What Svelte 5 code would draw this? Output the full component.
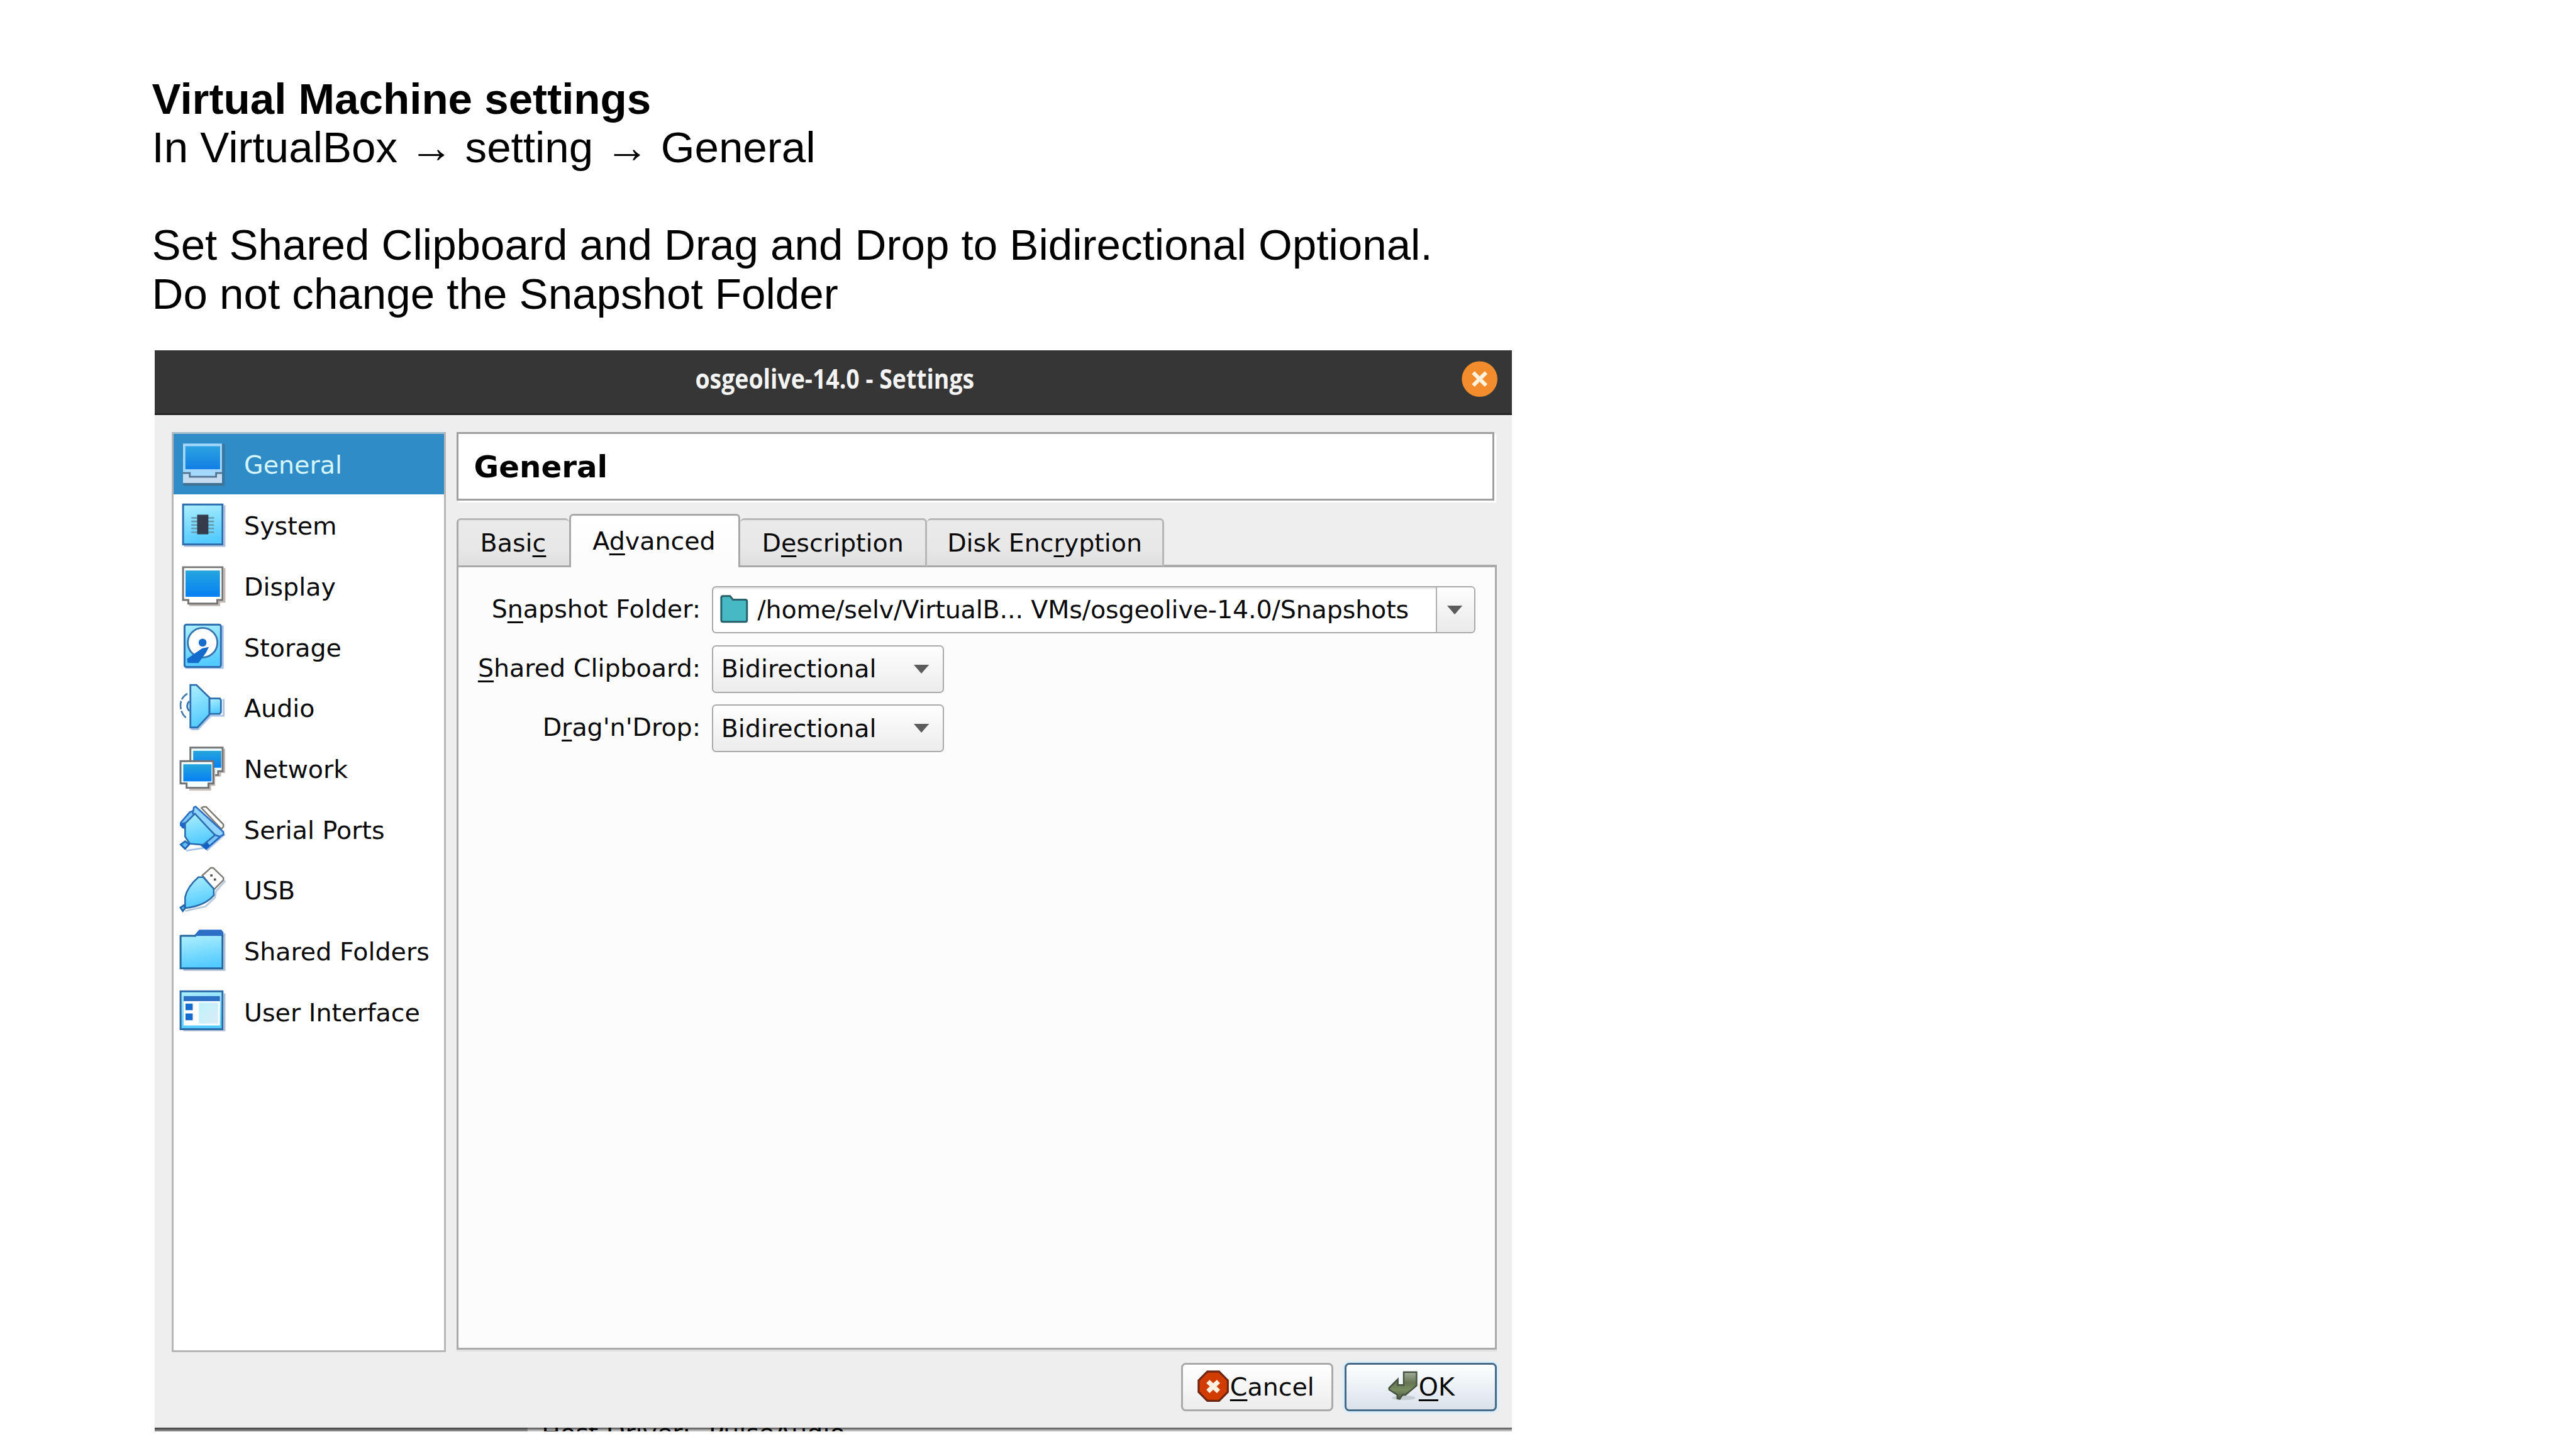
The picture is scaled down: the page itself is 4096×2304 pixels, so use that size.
<script>
  const sections = ['General', 'System', 'Display', 'Storage', 'Audio', 'Network', 'Serial Ports', 'USB', 'Shared Folders', 'User Interface'];

  // Each label is split around its keyboard mnemonic: [before, key, after]
  const tabs = [
    { id: 'basic', label: ['Basi', 'c', ''] },
    { id: 'advanced', label: ['A', 'd', 'vanced'] },
    { id: 'description', label: ['D', 'e', 'scription'] },
    { id: 'encryption', label: ['Disk Enc', 'r', 'yption'] }
  ];
  const choices = [
    { label: ['', 'S', 'hared Clipboard:'], value: 'Bidirectional' },
    { label: ['D', 'r', "ag'n'Drop:"], value: 'Bidirectional' }
  ];
  let activeSection = $state('General');
  let activeTab = $state('advanced');
</script>

{#snippet mnemonic(parts)}<span>{parts[0]}<span class="key">{parts[1]}</span>{parts[2]}</span>{/snippet}

{#snippet arrow()}
  <svg class="arrow" viewBox="0 0 26 15"><path d="M0 0H26L13 15Z" fill="#5c5c5c" /></svg>
{/snippet}

{#snippet icon(name)}
  <svg class="icon" viewBox="0 0 78 78">
    {#if name === 'General'}
      <path d="M72 4h5v72H7v-5h65z" fill="#3c7297" opacity=".8" />
      <rect x="5.4" y="3.6" width="66.6" height="67.4" fill="#a4d8ff" />
      <rect x="9.4" y="8" width="59.4" height="39.5" fill="url(#screenSel)" />
      <path d="M5.4 54H17v6.5h45V54h10v17H5.4z" fill="#c4dcf0" />
      <path d="M5.4 54H17v6.5h45V54h10" fill="none" stroke="#52738e" stroke-width="3" />
      <path d="M5.4 73H74" stroke="#47708f" stroke-width="3" />
    {:else if name === 'System'}
      <path d="M75 6h3v71H7v-3h68z" fill="#aebfdd" />
      <rect x="5.5" y="4.5" width="67.5" height="68.3" fill="url(#sky)" stroke="#2d6dab" stroke-width="3.2" />
      <path d="M19.6 27.5h39M19.6 33.5h39M19.6 39.5h39M19.6 45.5h39M19.6 52h39" stroke="#659bb3" stroke-width="2.8" />
      <rect x="29.6" y="22" width="19.2" height="33.5" fill="#343c4c" />
    {:else if name === 'Display'}
      <path d="M75 9h3v59h-9v6H16v-3h49v-6h10z" fill="#c3bab6" />
      <path d="M5.5 7.4H73v56.2H64v6H14.5v-6h-9z" fill="#fff" stroke="#747474" stroke-width="3.2" />
      <rect x="9.6" y="13.1" width="59" height="45" fill="url(#screen)" />
    {:else if name === 'Storage'}
      <path d="M72 3h3v74H10v-3h62z" fill="#a6c2e8" />
      <rect x="8" y="1.3" width="62.3" height="72.4" rx="3" fill="url(#sky)" stroke="#2b6dae" stroke-width="3.2" />
      <circle cx="38.9" cy="32.2" r="25.3" fill="#fff" stroke="#3575b0" stroke-width="3" />
      <circle cx="38.9" cy="32" r="6.8" fill="#176dcc" />
      <path d="M49.6 39.5 45 49 31.8 67H13.5L12 60 38 42z" fill="#136bcb" />
    {:else if name === 'Audio'}
      <path d="M19 77H31L53 54H75V25" fill="none" stroke="#a9c4e6" stroke-width="3" />
      <path d="M12.9 16Q0 24 1.2 38T12.9 59" fill="none" stroke="#3f76ae" stroke-width="2.8" stroke-dasharray="14 3" />
      <path d="M16 29Q9 37 16 46" fill="#c4ecff" stroke="#3575b0" stroke-width="3" />
      <path d="M18 1.2H28.2L50.7 23V52L30 74H18z" fill="url(#sky)" stroke="#2b6dae" stroke-width="3" />
      <path d="M50.7 24.4H68.5L70.3 27V48L68 50.8H50.7z" fill="url(#sky)" stroke="#2b6dae" stroke-width="3" />
    {:else if name === 'Network'}
      <path d="M76 6v40h-7v6H58" fill="none" stroke="#c3bab6" stroke-width="3" />
      <path d="M18 4H73.2V44.5H65.5V51H28V44.5H18z" fill="#efffff" stroke="#747474" stroke-width="3.2" />
      <rect x="22.8" y="9.5" width="48" height="29" fill="url(#screen)" />
      <path d="M59 40v28h-7v8H16" fill="none" stroke="#c3bab6" stroke-width="3" />
      <path d="M1.1 27.3H57.2V65.5H49V72.8H11.5V65.5H1.1z" fill="#f6ffff" stroke="#6e7276" stroke-width="3.2" />
      <rect x="5.8" y="32.5" width="48.4" height="29.3" fill="url(#screen)" />
    {:else if name === 'Serial Ports'}
      <path d="M77 48 47 75 43 71 11 76" fill="none" stroke="#a9c4e6" stroke-width="3" />
      <path d="M37 3 40 1H45L74.5 31V35L71 39z" fill="#fff" stroke="#7d7a74" stroke-width="2.6" />
      <path d="M25 7 17 10 1.5 28V33L9 38 25 20z" fill="#79c5fb" stroke="#2b6dc0" stroke-width="2.8" />
      <path d="M0 30 9 27V38H4z" fill="#1b66c8" />
      <path d="M60 46 68.5 52.7 45 73 36 66z" fill="#79c5fb" stroke="#1e66c0" stroke-width="2.8" />
      <path d="M36 64 45 59 51 67 44 73z" fill="#0f60c8" />
      <path d="M24 2 27 0.5 74.5 44V49L68 52 60 49 22 12z" fill="#92d5ff" stroke="#2b6dc0" stroke-width="2.8" />
      <path d="M25.8 12.7 9 29.5V52L17 64 40 66 60 49.4z" fill="url(#sky)" stroke="#2b6dae" stroke-width="2.8" />
      <path d="M1.5 65.5 9 60 16 65 9 73z" fill="#64baf5" stroke="#1e66b8" stroke-width="3" />
    {:else if name === 'USB'}
      <path d="M78 23 62 41 60 52 44 67 9 75" fill="none" stroke="#b8c8dd" stroke-width="3" />
      <path d="M38.5 14 53 1H57L74.5 18V22L58.5 38z" fill="#fff" stroke="#7d7a74" stroke-width="2.6" />
      <path d="M52 12h4v4h-4zM58 19h4v4h-4z" fill="#55504c" />
      <path d="M31.8 17H40L58 37V48Q43 66 9 70V51Q13 33 31.8 17z" fill="url(#sky)" stroke="#2b6dae" stroke-width="2.8" />
      <path d="M1 69 7 65 9 70 5 75z" fill="#64baf5" stroke="#1e66a8" stroke-width="3" />
    {:else if name === 'Shared Folders'}
      <path d="M75 10h3v64H6v-3h69z" fill="#aebfd5" />
      <path d="M25 13 33 3.4H71L74.6 8V16H25z" fill="#2c6fc6" />
      <rect x="1.2" y="14.2" width="71.8" height="55.6" fill="url(#sky)" />
      <path d="M1.2 13V69.8H73V13M1.2 14H28" fill="none" stroke="#23679f" stroke-width="3.2" />
    {:else}
      <path d="M75 8h3v65H6v-3h69z" fill="#aebfd5" />
      <rect x="1.2" y="4.6" width="71.8" height="64.8" fill="url(#sky)" stroke="#2b6aa8" stroke-width="3.2" />
      <rect x="6.4" y="12.7" width="62.2" height="50.3" fill="#fff" />
      <rect x="6.4" y="12.7" width="62.2" height="8.7" fill="#2d71c4" />
      <path d="M9.6 25.5H22V37H9.6zM9.6 42.5H22V54H9.6z" fill="#146cd0" />
      <rect x="32.5" y="24" width="33" height="36" fill="url(#pale)" />
    {/if}
  </svg>
{/snippet}

<svg class="defs" aria-hidden="true">
  <defs>
    <linearGradient id="sky" x1="0" y1="0" x2=".2" y2="1"><stop stop-color="#adeffd" /><stop offset="1" stop-color="#54cbfe" /></linearGradient>
    <linearGradient id="screen" x1="0" y1="0" x2="0" y2="1"><stop stop-color="#25a5dd" /><stop offset="1" stop-color="#0580f4" /></linearGradient>
    <linearGradient id="screenSel" x1="0" y1="0" x2="0" y2="1"><stop stop-color="#2ba2df" /><stop offset="1" stop-color="#127fe6" /></linearGradient>
    <linearGradient id="pale" x1="0" y1="0" x2="1" y2="1"><stop stop-color="#bdf2fc" /><stop offset="1" stop-color="#dcecf4" /></linearGradient>
    <linearGradient id="moss" x1="0" y1="0" x2="0" y2="1"><stop stop-color="#a3ac99" /><stop offset=".4" stop-color="#647653" /><stop offset=".65" stop-color="#788c60" /><stop offset="1" stop-color="#4d5a45" /></linearGradient>
  </defs>
</svg>

<main class="slide">
  <section class="intro">
    <h1>Virtual Machine settings</h1>
    <p>In VirtualBox → setting → General</p>
    <p class="spaced">Set Shared Clipboard and Drag and Drop to Bidirectional Optional.</p>
    <p>Do not change the Snapshot Folder</p>
  </section>

  <section class="dialog">
    <header class="titlebar">
      <span class="title">osgeolive-14.0 - Settings</span>
      <svg class="close" viewBox="0 0 64 64">
        <circle cx="32" cy="32" r="30.5" fill="#f28c2c" />
        <path d="M21 21 43 43M43 21 21 43" stroke="#fff3dc" stroke-width="6.5" />
      </svg>
    </header>

    <div class="content">
      <nav class="sidebar">
        {#each sections as name}
          <button class="section" class:selected={name === activeSection} onclick={() => (activeSection = name)}>
            {@render icon(name)}
            <span>{name}</span>
          </button>
        {/each}
      </nav>

      <div class="page">
        <h2 class="heading">{activeSection}</h2>
        <div class="tabs">
          {#each tabs as tab}
            <button class="tab {tab.id}" class:active={tab.id === activeTab} onclick={() => (activeTab = tab.id)}>{@render mnemonic(tab.label)}</button>
          {/each}
          <div class="tabfill"></div>
        </div>
        <div class="pane">
          <div class="row">
            <span class="label">{@render mnemonic(['S', 'n', 'apshot Folder:'])}</span>
            <div class="path">
              <svg class="folder" viewBox="0 0 48 48"><path d="M5 2H17L22 8H43Q46 8 46 11V43Q46 46 43 46H5Q2 46 2 43V5Q2 2 5 2Z" fill="#46b9c5" stroke="#27606a" stroke-width="3.2" /></svg>
              <span class="value">/home/selv/VirtualB... VMs/osgeolive-14.0/Snapshots</span>
              <span class="drop">{@render arrow()}</span>
            </div>
          </div>
          {#each choices as choice}
            <div class="row">
              <span class="label">{@render mnemonic(choice.label)}</span>
              <div class="select"><span>{choice.value}</span>{@render arrow()}</div>
            </div>
          {/each}
        </div>
      </div>
    </div>

    <footer class="actions">
      <button class="action cancel">
        <svg class="glyph" viewBox="0 0 54 54">
          <path d="M17 2H37L52 17V37L37 52H17L2 37V17Z" fill="#d13d00" stroke="#6e2510" stroke-width="3.4" />
          <path d="M18 19 36 36M36 19 18 36" stroke="#fff0e2" stroke-width="8" />
        </svg>
        {@render mnemonic(['', 'C', 'ancel'])}
      </button>
      <button class="action ok">
        <svg class="glyph" viewBox="0 0 54 54">
          <ellipse cx="28" cy="47" rx="20" ry="4" fill="#b9c2c6" opacity=".7" />
          <path d="M28 3H50V26L31 42H26L21 49 17 48V42L3 33V30L18 15V25H28Z" fill="url(#moss)" stroke="#46513f" stroke-width="2.6" />
        </svg>
        {@render mnemonic(['', 'O', 'K'])}
      </button>
    </footer>
  </section>
  <div class="behind"><span class="host">Host Driver:</span><span>PulseAudio</span></div>
</main>

<style>
  /* 1rem = 100 layout units */
  :global(html) { font-size: 92.901px; }
  :global(body) { margin: 0; background: #fff; overflow: hidden; }
  * { box-sizing: border-box; }
  button { margin: 0; border: 0; padding: 0; background: none; font: inherit; color: inherit; letter-spacing: inherit; text-align: left; }
  svg { display: block; flex: none; }
  .defs { position: absolute; width: 0; height: 0; }

  .slide { width: 44.09rem; height: 24.8rem; background: #fff; overflow: hidden; color: #000; }
  .intro { height: 6rem; padding: 1.28rem 0 0 2.6rem; font-family: "Liberation Sans", Arial, sans-serif; font-size: .744rem; line-height: .834rem; white-space: nowrap; }
  .intro h1, .intro p { margin: 0; font-size: inherit; }
  .intro .spaced { margin-top: .834rem; }

  .dialog { width: 23.23rem; height: 18.44rem; margin-left: 2.65rem; background: #eee; font-family: "DejaVu Sans", sans-serif; font-size: .426rem; white-space: nowrap; color: #0a0a0a; }
  .titlebar { display: grid; grid-template-columns: 1fr auto 1fr; align-items: center; height: 1.1rem; padding: 0 .235rem 0 .28rem; background: #363636; border-bottom: .035rem solid #242424; }
  .title { grid-column: 2; color: #f4f4f4; font-family: "Open Sans", sans-serif; font-weight: 700; font-size: .46rem; line-height: .6rem; transform: scaleX(.876); margin-top: -.11rem; }
  .close { width: .64rem; height: .64rem; justify-self: end; margin-top: -.1rem; }

  .content { display: flex; gap: .19rem; height: 16.04rem; padding: .29rem .26rem 0 .29rem; }
  .sidebar { display: flex; flex-direction: column; width: 4.69rem; height: 15.75rem; padding: 0; background: #fff; border: .04rem solid #b6b6b6; border-top-color: #a3bdcc; }
  .section { display: flex; align-items: center; gap: .32rem; height: 1.041rem; padding-left: .105rem; }
  .section span { padding-top: .035rem; }
  .selected { background: #308cc6; color: #d5f6ff; }
  .icon { width: .78rem; height: .78rem; overflow: visible; }

  .page { display: flex; flex-direction: column; width: 17.8rem; }
  .heading { margin: 0 .04rem .225rem 0; height: 1.18rem; padding: .06rem 0 0 .26rem; border: .035rem solid #9f9f9f; box-shadow: .035rem .035rem 0 #fff; background: #fff; font-size: .52rem; font-weight: 700; line-height: 1.02rem; color: #000; }
  .tabs { display: flex; align-items: flex-end; height: .91rem; }
  .tab { display: flex; justify-content: center; height: .84rem; line-height: .79rem; border: .035rem solid #b7b7b7; border-left: 0; border-bottom-color: #a9a9a9; border-radius: .07rem .07rem 0 0; background: linear-gradient(#eaeaea, #e8e8e8 60%, #dfdfdf); }
  .basic { width: 1.925rem; padding-right: .03rem; border-left: .035rem solid #a9a9a9; border-right: 0; }
  .advanced { width: 2.93rem; }
  .description { width: 3.19rem; }
  .encryption { width: 4.065rem; }
  .tab.active { height: .91rem; border: .035rem solid #a9a9a9; border-bottom: 0; background: linear-gradient(#fff, #fcfcfc); line-height: .87rem; padding-right: .03rem; }
  .tabfill { flex: 1; height: .035rem; background: #a9a9a9; }
  .pane { height: 13.4rem; padding: .325rem .335rem 0 0; display: flex; flex-direction: column; gap: .2rem; background: #fcfcfc; border: .035rem solid #a9a9a9; border-top: 0; box-shadow: 0 .035rem 0 #e1e1e1; }
  .row { display: flex; height: .815rem; line-height: .785rem; }
  .label { width: 4.14rem; margin-right: .19rem; text-align: right; }
  .path { display: flex; align-items: center; flex: 1; border: .03rem solid #a9a9a9; border-radius: .07rem; background: #fff; box-shadow: inset 0 .03rem 0 #ececec; }
  .folder { width: .48rem; height: .48rem; margin: -.02rem .155rem 0 .125rem; }
  .value { flex: 1; width: 0; letter-spacing: -.0015rem; }
  .drop { display: flex; align-items: center; justify-content: center; width: .655rem; height: 100%; padding-right: .03rem; border-left: .03rem solid #b0b0b0; border-radius: 0 .05rem .05rem 0; background: linear-gradient(#fdfdfd, #eaeaea); }
  .select { display: flex; align-items: center; justify-content: space-between; width: 3.97rem; padding: 0 .23rem 0 .14rem; border: .03rem solid #a9a9a9; border-radius: .07rem; background: linear-gradient(#fefefe, #ececec); }
  .arrow { width: .26rem; height: .15rem; }
  .key { text-decoration: underline; text-decoration-thickness: .033rem; text-underline-offset: .068rem; text-decoration-skip-ink: none; }

  .actions { display: flex; justify-content: flex-end; gap: .19rem; height: 1.3rem; padding: .19rem .26rem 0 0; }
  .action { display: flex; align-items: center; width: 2.61rem; height: .82rem; border: .035rem solid #a9a9a9; border-radius: .08rem; background: linear-gradient(#fff, #ececec); line-height: .7rem; }
  .cancel { padding-left: .25rem; gap: .02rem; }
  .ok { padding-left: .7rem; border-color: #456987; background: linear-gradient(#fdffff, #d9e2ea); box-shadow: 0 0 .04rem .02rem #cdeeff; }
  .glyph { width: .54rem; height: .54rem; margin-top: -.03rem; }

  /* Sliver of the window underneath, visible below the dialog */
  .behind { display: flex; width: 23.23rem; height: .06rem; margin-left: 2.65rem; overflow: hidden; background: linear-gradient(#4e4e4e 50%, #828282 50%) 0 0 / 6.38rem 100% no-repeat, linear-gradient(#6b6b6b 50%, #b9b9b9 50%); font-family: "DejaVu Sans", sans-serif; font-size: .426rem; line-height: .46rem; white-space: nowrap; color: #000; }
  .behind span { margin-top: -.15rem; height: .46rem; }
  .behind .host { margin-left: 6.62rem; margin-right: .31rem; }
</style>
